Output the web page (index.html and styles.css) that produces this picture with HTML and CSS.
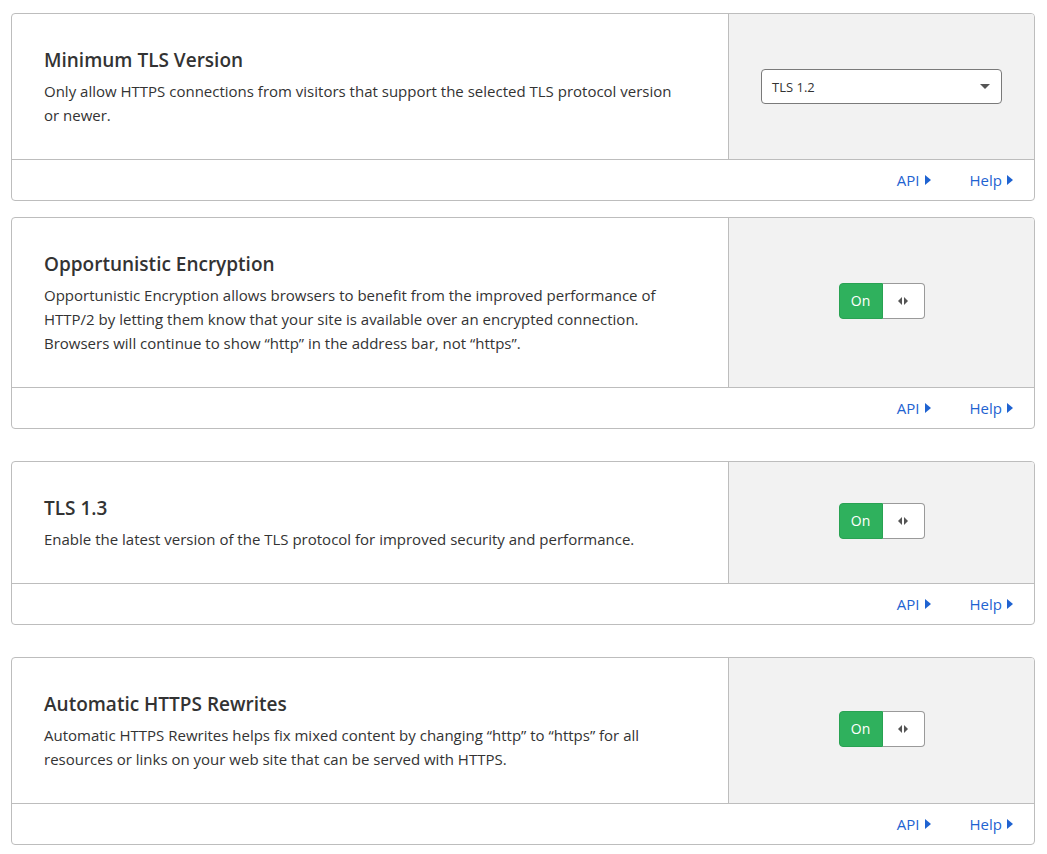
FILE: index.html
```html
<!DOCTYPE html>
<html>
<head>
<meta charset="utf-8">
<link rel="stylesheet" href="styles.css">
</head>
<body>
<div class="page">
  <div class="group">
    <section class="card">
      <div class="card-main">
        <div class="card-text">
          <h3 class="card-title">Minimum TLS Version</h3>
          <p class="card-desc">Only allow HTTPS connections from visitors that support the selected TLS protocol version or newer.</p>
        </div>
        <div class="card-control">
          <div class="select">
            <span class="select-value">TLS 1.2</span>
            <span class="select-caret"></span>
          </div>
        </div>
      </div>
      <div class="card-footer">
        <a class="footer-link">API<span class="tri"></span></a>
        <a class="footer-link">Help<span class="tri"></span></a>
      </div>
    </section>
    <section class="card">
      <div class="card-main">
        <div class="card-text">
          <h3 class="card-title">Opportunistic Encryption</h3>
          <p class="card-desc">Opportunistic Encryption allows browsers to benefit from the improved performance of HTTP/2 by letting them know that your site is available over an encrypted connection. Browsers will continue to show “http” in the address bar, not “https”.</p>
        </div>
        <div class="card-control">
          <div class="toggle"><span class="toggle-on">On</span><span class="toggle-knob"><span class="arr-l"></span><span class="arr-r"></span></span></div>
        </div>
      </div>
      <div class="card-footer">
        <a class="footer-link">API<span class="tri"></span></a>
        <a class="footer-link">Help<span class="tri"></span></a>
      </div>
    </section>
  </div>
  <section class="card">
    <div class="card-main">
      <div class="card-text">
        <h3 class="card-title">TLS 1.3</h3>
        <p class="card-desc">Enable the latest version of the TLS protocol for improved security and performance.</p>
      </div>
      <div class="card-control">
        <div class="toggle"><span class="toggle-on">On</span><span class="toggle-knob"><span class="arr-l"></span><span class="arr-r"></span></span></div>
      </div>
    </div>
    <div class="card-footer">
      <a class="footer-link">API<span class="tri"></span></a>
      <a class="footer-link">Help<span class="tri"></span></a>
    </div>
  </section>
  <section class="card">
    <div class="card-main">
      <div class="card-text">
        <h3 class="card-title">Automatic HTTPS Rewrites</h3>
        <p class="card-desc">Automatic HTTPS Rewrites helps fix mixed content by changing “http” to “https” for all resources or links on your web site that can be served with HTTPS.</p>
      </div>
      <div class="card-control">
        <div class="toggle"><span class="toggle-on">On</span><span class="toggle-knob"><span class="arr-l"></span><span class="arr-r"></span></span></div>
      </div>
    </div>
    <div class="card-footer">
      <a class="footer-link">API<span class="tri"></span></a>
      <a class="footer-link">Help<span class="tri"></span></a>
    </div>
  </section>
</div>
</body>
</html>
```

FILE: styles.css
```css
* { box-sizing: border-box; }
html, body { margin: 0; padding: 0; background: #fff; }
body {
  font-family: "Open Sans", "Noto Sans", "DejaVu Sans", sans-serif;
  color: #333;
}
.page {
  padding: 13px 12px 0 11px;
  display: flex;
  flex-direction: column;
  gap: 32px;
}
.group {
  display: flex;
  flex-direction: column;
  gap: 16px;
}
.card {
  border: 1px solid #bdbdbd;
  border-radius: 4px;
  background: #fff;
  overflow: hidden;
}
.card-main {
  display: flex;
  border-bottom: 1px solid #bdbdbd;
}
.card-text {
  flex: 1;
  padding: 32px 42px 32px 32px;
}
.card-title {
  margin: 0;
  font-size: 19px;
  font-weight: 600;
  line-height: 28px;
  color: #333;
}
.card-desc {
  margin: 5px 0 0 0;
  font-size: 15px;
  line-height: 24px;
  color: #333;
}
.card-control {
  width: 306px;
  flex: none;
  background: #f2f2f2;
  border-left: 1px solid #bdbdbd;
  display: flex;
  align-items: center;
  justify-content: center;
}
.select {
  width: 241px;
  height: 35px;
  background: #fff;
  border: 1px solid #7a7a7a;
  border-radius: 4px;
  display: flex;
  align-items: center;
  justify-content: space-between;
  padding: 0 11px 0 10px;
}
.select-value {
  font-size: 13px;
  color: #333;
}
.select-caret {
  width: 0; height: 0;
  border-left: 5px solid transparent;
  border-right: 5px solid transparent;
  border-top: 5px solid #555;
}
.toggle {
  display: flex;
  width: 86px;
  height: 36px;
  margin-bottom: 4px;
  border-radius: 4px;
}
.toggle-on {
  width: 44px;
  background: #2fb15d;
  border: 1px solid #29a253;
  border-radius: 4px 0 0 4px;
  color: #fff;
  font-size: 14px;
  display: flex;
  align-items: center;
  justify-content: center;
}
.toggle-knob {
  flex: 1;
  background: #fff;
  border: 1px solid #9a9a9a;
  border-left: none;
  border-radius: 0 4px 4px 0;
  display: flex;
  align-items: center;
  justify-content: center;
  gap: 2px;
}
.arr-l, .arr-r { width: 0; height: 0; border-top: 4px solid transparent; border-bottom: 4px solid transparent; }
.arr-l { border-right: 4px solid #555; }
.arr-r { border-left: 4px solid #555; }
.card-footer {
  height: 40px;
  display: flex;
  align-items: center;
  justify-content: flex-end;
  gap: 39px;
  padding-right: 21px;
}
.footer-link {
  color: #1f63d1;
  font-size: 15px;
  display: flex;
  align-items: center;
  gap: 5px;
}
.tri {
  width: 0; height: 0;
  border-top: 5px solid transparent;
  border-bottom: 5px solid transparent;
  border-left: 6px solid #1f63d1;
}
```
